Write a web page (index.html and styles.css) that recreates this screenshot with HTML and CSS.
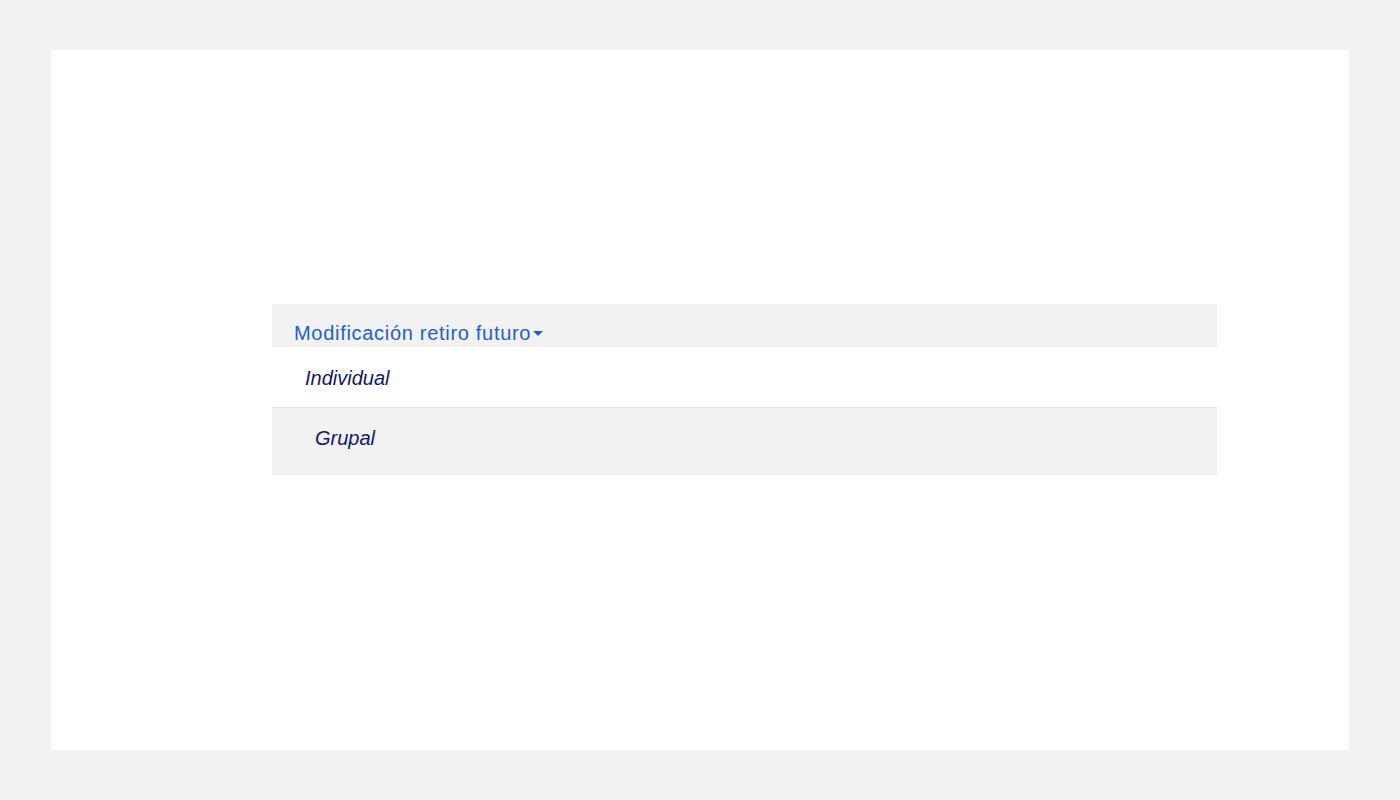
FILE: index.html
```html
<!DOCTYPE html>
<html lang="es">
<head>
<meta charset="utf-8">
<title>Modificación retiro futuro</title>
<link rel="stylesheet" href="styles.css">
</head>
<body>
<div class="page">
  <div class="menu">
    <div class="menu-head">
      <span class="menu-title">Modificación retiro futuro</span><span class="caret"></span>
    </div>
    <div class="menu-item item-individual">Individual</div>
    <div class="menu-item item-grupal">Grupal</div>
  </div>
</div>
</body>
</html>
```

FILE: styles.css
```css
html, body {
  margin: 0;
  padding: 0;
  background: #f2f2f2;
}
body {
  padding: 50px 51px;
  font-family: "Liberation Sans", Arial, sans-serif;
}
.page {
  background: #ffffff;
  height: 700px;
  padding-top: 254px;
  padding-left: 221px;
  padding-right: 132px;
  box-sizing: border-box;
}
.menu {
  width: 945px;
}
.menu-head {
  background: #f2f2f2;
  height: 43px;
  box-sizing: border-box;
  padding: 15px 0 0 22px;
  display: flex;
  align-items: center;
}
.menu-title {
  color: #1a5fd9;
  font-size: 20px;
  line-height: 24px;
  letter-spacing: 0.7px;
}
.caret {
  display: inline-block;
  width: 0;
  height: 0;
  border-left: 5px solid transparent;
  border-right: 5px solid transparent;
  border-top: 5px solid #1a5fd9;
  margin-left: 2px;
  margin-top: 1px;
}
.menu-item {
  color: #0c1a73;
  font-style: italic;
  font-size: 20px;
  line-height: 24px;
  box-sizing: border-box;
}
.item-individual {
  height: 61px;
  padding: 19px 0 0 33px;
  background: #ffffff;
  border-bottom: 1px solid #e0e0e0;
}
.item-grupal {
  height: 67px;
  padding: 18px 0 0 43px;
  background: #f2f2f2;
}
```
